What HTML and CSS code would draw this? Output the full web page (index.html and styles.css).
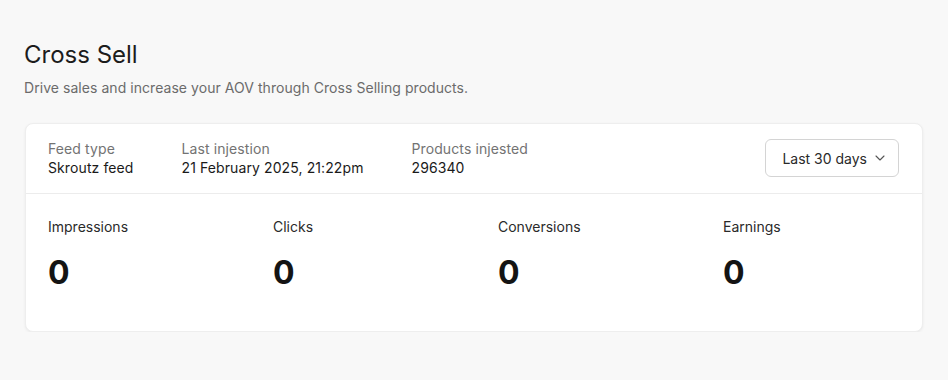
FILE: index.html
```html
<!DOCTYPE html>
<html lang="en">
<head>
  <meta charset="UTF-8" />
  <meta name="viewport" content="width=device-width, initial-scale=1.0"/>
  <title>Cross Sell</title>
  <link rel="stylesheet" href="styles.css">
</head>
<body>
  <div class="page">
    <h1 class="title">Cross Sell</h1>
    <p class="subtitle">Drive sales and increase your AOV through Cross Selling products.</p>

    <div class="card">
      <!-- feed info -->
      <div class="card-head">
        <div class="info">
          <div class="info-item">
            <span class="info-label">Feed type</span>
            <span class="info-value">Skroutz feed</span>
          </div>
          <div class="info-item">
            <span class="info-label">Last injestion</span>
            <span class="info-value">21 February 2025, 21:22pm</span>
          </div>
          <div class="info-item">
            <span class="info-label">Products injested</span>
            <span class="info-value">296340</span>
          </div>
        </div>
        <button class="range-btn">
          Last 30 days
          <svg width="10" height="6" viewBox="0 0 10 6" fill="none"><path d="M1 1l4 4 4-4" stroke="#555" stroke-width="1.1" stroke-linecap="round" stroke-linejoin="round"/></svg>
        </button>
      </div>

      <!-- stats -->
      <div class="stats">
        <div class="stat">
          <span class="stat-label">Impressions</span>
          <span class="stat-value">0</span>
        </div>
        <div class="stat">
          <span class="stat-label">Clicks</span>
          <span class="stat-value">0</span>
        </div>
        <div class="stat">
          <span class="stat-label">Conversions</span>
          <span class="stat-value">0</span>
        </div>
        <div class="stat">
          <span class="stat-label">Earnings</span>
          <span class="stat-value">0</span>
        </div>
      </div>
    </div>
  </div>
</body>
</html>
```

FILE: styles.css
```css
body {
  margin: 0;
  font-family: Inter, "Noto Sans", sans-serif;
  background-color: #f8f8f8;
  color: #1a1a1a;
}

.page {
  padding: 40px 25px 0 25px;
}

.title {
  margin: 0;
  font-size: 24px;
  font-weight: 400;
  line-height: 30px;
  color: #1c1c1c;
  margin-left: -1px;
}

.subtitle {
  margin: 8px 0 25px -1px;
  font-size: 14px;
  line-height: 20px;
  color: #6b6b6b;
  letter-spacing: 0.05px;
}

.card {
  background-color: #fff;
  border-radius: 8px;
  border: 1px solid #eeeeee;
  box-shadow: 0 1px 3px rgba(0,0,0,0.06);
}

.card-head {
  display: flex;
  justify-content: space-between;
  align-items: center;
  padding: 15px 23px 16px 22px;
  border-bottom: 1px solid #ececec;
}

.info {
  display: flex;
  gap: 48px;
}

.info-item {
  display: flex;
  flex-direction: column;
}

.info-label {
  font-size: 14px;
  line-height: 19px;
  color: #737373;
  letter-spacing: 0.1px;
}

.info-value {
  font-size: 14px;
  line-height: 19px;
  color: #1a1a1a;
  letter-spacing: 0.1px;
}

.range-btn {
  display: flex;
  align-items: center;
  gap: 8px;
  height: 38px;
  padding: 0 13px 0 16px;
  background: #fff;
  border: 1px solid #d4d4d4;
  border-radius: 6px;
  font-family: inherit;
  font-size: 14px;
  color: #2a2a2a;
}

.stats {
  display: grid;
  grid-template-columns: repeat(4, 225px);
  padding: 23px 0 38px 22px;
}

.stat {
  display: flex;
  flex-direction: column;
  gap: 16px;
}

.stat-label {
  font-size: 14px;
  line-height: 20px;
  color: #2a2a2a;
}

.stat-value {
  font-size: 32px;
  font-weight: 700;
  line-height: 40px;
  color: #141414;
}
```
